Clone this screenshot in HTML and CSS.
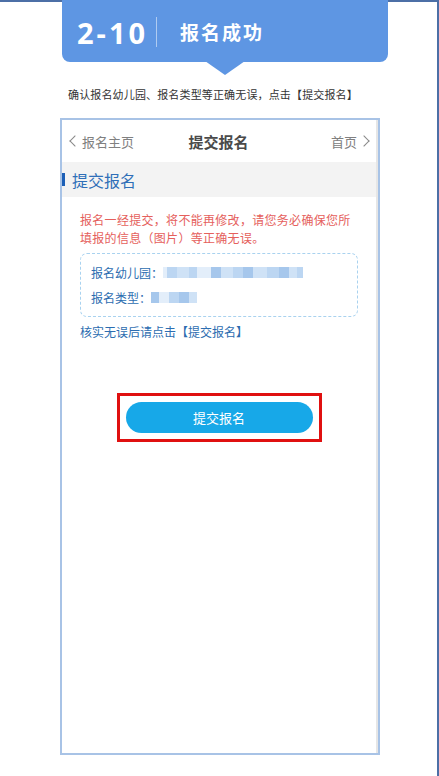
FILE: index.html
```html
<!DOCTYPE html>
<html lang="zh">
<head>
<meta charset="utf-8">
<link rel="stylesheet" href="styles.css">
</head>
<body>
<div class="page">
  <div class="banner-wrap">
    <div class="banner">
      <span class="num">2-10</span>
      <span class="sep"></span>
      <span class="title">报名成功</span>
    </div>
    <div class="pointer"></div>
  </div>
  <p class="desc">确认报名幼儿园、报名类型等正确无误，点击【提交报名】</p>
  <div class="phone">
    <div class="screen">
      <div class="topbar">
        <span class="back"><span class="chev chev-l"></span>报名主页</span>
        <span class="topttl">提交报名</span>
        <span class="home">首页<span class="chev chev-r"></span></span>
      </div>
      <div class="section">
        <span class="mark"></span>
        <span class="sectxt">提交报名</span>
      </div>
      <div class="content">
        <p class="warn">报名一经提交，将不能再修改，请您务必确保您所填报的信息（图片）等正确无误。</p>
        <div class="info">
          <div class="row">
            <span class="lbl">报名幼儿园：</span>
            <span class="blur">
              <i class="b1 w4"></i><i class="b3 w10"></i><i class="b2 w12"></i><i class="b3 w8"></i><i class="b1 w14"></i><i class="b4 w10"></i><i class="b2 w12"></i><i class="b3 w10"></i><i class="b4 w10"></i><i class="b2 w14"></i><i class="b3 w12"></i><i class="b4 w10"></i><i class="b2 w8"></i><i class="b3 w6"></i>
            </span>
          </div>
          <div class="row">
            <span class="lbl">报名类型：</span>
            <span class="blur">
              <i class="b4 w8"></i><i class="b1 w10"></i><i class="b3 w10"></i><i class="b4 w10"></i><i class="b2 w8"></i>
            </span>
          </div>
        </div>
        <p class="hint">核实无误后请点击【提交报名】</p>
        <div class="btn-area">
          <div class="highlight">
            <div class="btn">提交报名</div>
          </div>
        </div>
      </div>
    </div>
    <div class="scroll"></div>
  </div>
</div>
</body>
</html>
```

FILE: styles.css
```css
* { box-sizing: border-box; margin: 0; padding: 0; }
html, body { width: 439px; height: 776px; background: #fff; overflow: hidden; }
body { font-family: "Noto Sans CJK SC", "Microsoft YaHei", sans-serif; }
.page {
  width: 439px;
  height: 776px;
  border-top: 2px solid #4c6fa6;
  border-right: 2px solid #4c6fa6;
  position: relative;
}
.banner-wrap {
  margin-left: 62px;
  width: 326px;
  position: relative;
  height: 73px;
  margin-top: -2px;
}
.banner {
  height: 62px;
  background: #5e96e3;
  border-radius: 0 0 8px 8px;
  display: flex;
  align-items: center;
  padding-left: 15px;
  color: #fff;
}
.num {
  font-family: "Open Sans", "DejaVu Sans", sans-serif;
  font-weight: 700;
  font-size: 29px;
  letter-spacing: 3px;
  line-height: 1;
  margin-top: 2px;
}
.sep {
  width: 1px;
  height: 30px;
  background: rgba(255,255,255,0.5);
  margin-left: 8px;
  margin-right: 23px;
  margin-top: 2px;
}
.title {
  font-size: 19px;
  font-weight: 700;
  letter-spacing: 2px;
  margin-top: 1px;
}
.pointer {
  position: absolute;
  left: 143px;
  top: 61px;
  width: 0; height: 0;
  border-left: 20px solid transparent;
  border-right: 20px solid transparent;
  border-top: 14px solid #5e96e3;
}
.desc {
  margin-top: 13px;
  margin-left: 68px;
  font-size: 11px;
  color: #333;
  line-height: 16px;
  letter-spacing: 0.15px;
}
.phone {
  position: absolute;
  left: 60px;
  top: 116px;
  width: 320px;
  height: 637px;
  border: 2px solid #a8c3e6;
  display: flex;
}
.screen {
  flex: 1;
  display: flex;
  flex-direction: column;
}
.scroll {
  width: 2px;
  background: #e6e6e6;
}
.topbar {
  height: 42px;
  display: flex;
  align-items: center;
  justify-content: space-between;
  padding: 0 8px 0 6px;
  background: #fff;
  color: #808080;
  font-size: 13px;
}
.back, .home { display: flex; align-items: center; }
.chev {
  width: 8px; height: 8px;
  border-left: 1px solid #888;
  border-bottom: 1px solid #888;
  display: inline-block;
}
.chev-l { transform: rotate(45deg); margin-right: 3px; margin-left: 3px; }
.chev-r { transform: rotate(-135deg); margin-left: 3px; }
.topttl {
  font-size: 15px;
  font-weight: 700;
  color: #4a4a4a;
  margin-right: 28px;
}
.section {
  height: 35px;
  background: #f3f3f3;
  display: flex;
  align-items: center;
}
.mark {
  width: 3px;
  height: 13px;
  background: #1c5fb6;
  margin-right: 7px;
}
.sectxt {
  font-size: 16px;
  color: #2f6fb8;
}
.content {
  flex: 1;
  background: #fff;
  padding: 14px 18px 0 18px;
}
.warn {
  color: #e5605c;
  font-size: 12px;
  line-height: 18px;
  letter-spacing: 0.3px;
}
.info {
  margin-top: 6px;
  border: 1px dashed #a9d2ef;
  border-radius: 7px;
  height: 64px;
  padding: 9px 10px 0 10px;
  display: flex;
  flex-direction: column;
  gap: 7px;
}
.row {
  display: flex;
  align-items: center;
  height: 18px;
}
.lbl {
  font-size: 12px;
  color: #2c6db0;
}
.blur { display: flex; height: 11px; margin-top: 1px; }
.blur i { display: block; height: 100%; }
.b1 { background: #e3eefa; }
.b2 { background: #cfe2f6; }
.b3 { background: #bcd6f2; }
.b4 { background: #a6c7ec; }
.w4 { width: 4px; } .w6 { width: 6px; } .w8 { width: 8px; } .w10 { width: 10px; } .w12 { width: 12px; } .w14 { width: 14px; }
.hint {
  margin-top: 6px;
  font-size: 12px;
  color: #2c6db0;
  line-height: 18px;
}
.btn-area {
  margin-top: 52px;
  display: flex;
  justify-content: center;
}
.highlight {
  width: 205px;
  height: 49px;
  border: 3px solid #e01010;
  padding: 6px;
}
.btn {
  height: 31px;
  border-radius: 16px;
  background: #17a8e8;
  color: #fff;
  font-size: 13px;
  display: flex;
  align-items: center;
  justify-content: center;
}
```
